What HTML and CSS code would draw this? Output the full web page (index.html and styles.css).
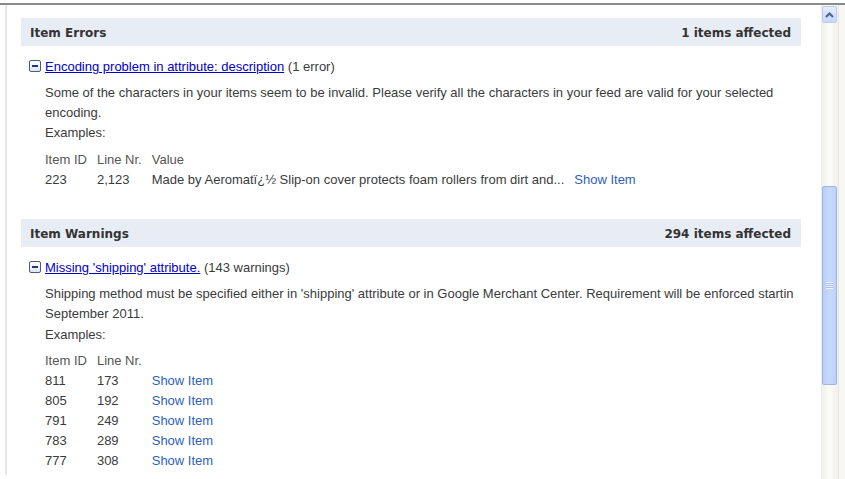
FILE: index.html
```html
<!DOCTYPE html>
<html>
<head>
<meta charset="utf-8">
<title>Feed diagnostics</title>
<link rel="stylesheet" href="styles.css">
</head>
<body>
<div class="window">
  <div class="viewport">
    <div class="content">
      <section class="group">
        <div class="group-head"><span>Item Errors</span><span>1 items affected</span></div>
        <div class="issue">
          <div class="issue-title"><span class="toggle"></span><a href="#">Encoding problem in attribute: description</a>&nbsp;<span class="count">(1 error)</span></div>
          <div class="issue-body">
            <p class="desc">Some of the characters in your items seem to be invalid. Please verify all the characters in your feed are valid for your selected encoding.</p>
            <p class="label">Examples:</p>
            <table class="examples">
              <tr><th>Item ID</th><th>Line Nr.</th><th>Value</th><th></th></tr>
              <tr><td>223</td><td>2,123</td><td>Made by Aeromatï¿½ Slip-on cover protects foam rollers from dirt and...</td><td><a class="show" href="#">Show Item</a></td></tr>
            </table>
          </div>
        </div>
      </section>
      <section class="group warnings">
        <div class="group-head"><span>Item Warnings</span><span>294 items affected</span></div>
        <div class="issue">
          <div class="issue-title"><span class="toggle"></span><a href="#">Missing 'shipping' attribute.</a>&nbsp;<span class="count">(143 warnings)</span></div>
          <div class="issue-body">
            <p class="desc">Shipping method must be specified either in 'shipping' attribute or in Google Merchant Center. Requirement will be enforced startin September 2011.</p>
            <p class="label">Examples:</p>
            <table class="examples">
              <tr><th>Item ID</th><th>Line Nr.</th><th></th></tr>
              <tr><td>811</td><td>173</td><td><a class="show" href="#">Show Item</a></td></tr>
              <tr><td>805</td><td>192</td><td><a class="show" href="#">Show Item</a></td></tr>
              <tr><td>791</td><td>249</td><td><a class="show" href="#">Show Item</a></td></tr>
              <tr><td>783</td><td>289</td><td><a class="show" href="#">Show Item</a></td></tr>
              <tr><td>777</td><td>308</td><td><a class="show" href="#">Show Item</a></td></tr>
            </table>
          </div>
        </div>
      </section>
    </div>
    <div class="scrollbar">
      <div class="sb-btn">
        <svg width="9" height="6" viewBox="0 0 9 6"><path d="M1 5 L4.5 1.5 L8 5" fill="none" stroke="#4d6185" stroke-width="2"/></svg>
      </div>
      <div class="sb-thumb">
        <div class="grip"></div>
      </div>
    </div>
    <div class="edge"></div>
  </div>
</div>
</body>
</html>
```
FILE: styles.css
```css
html, body {
  margin: 0;
  padding: 0;
  background: #fff;
}
body {
  font-family: "Liberation Sans", Arial, sans-serif;
  font-size: 13px;
  color: #3b3b3b;
}
.window {
  padding-top: 3px;
  height: 479px;
  box-sizing: border-box;
  overflow: hidden;
}
.viewport {
  border-top: 2px solid #8a8a8a;
  display: flex;
  height: 474px;
}
.content {
  flex: 1;
  margin-left: 5px;
  border-left: 2px solid #e3e6ef;
  padding: 13px 20px 0 14px;
  height: 470px;
  box-sizing: border-box;
  overflow: hidden;
}
.group-head {
  display: flex;
  justify-content: space-between;
  align-items: center;
  height: 28px;
  box-sizing: border-box;
  background: #e8edf5;
  padding: 2px 10px 0 9px;
  font-family: "DejaVu Sans", Verdana, sans-serif;
  font-weight: bold;
  font-size: 12px;
  color: #333;
}
.warnings {
  margin-top: 29px;
}
.issue-title {
  margin-top: 11px;
  height: 20px;
  line-height: 20px;
  padding-left: 8px;
  display: flex;
  align-items: center;
  white-space: nowrap;
}
.toggle {
  width: 10px;
  height: 10px;
  border: 1px solid #4b5b7c;
  border-radius: 2px;
  background: linear-gradient(#ffffff, #dfe4ee);
  margin-right: 4px;
  position: relative;
  flex: none;
  margin-top: -3px;
}
.toggle::after {
  content: "";
  position: absolute;
  left: 2px;
  top: 4px;
  width: 6px;
  height: 2px;
  background: #1f3a70;
}
.issue-title a {
  color: #0000cc;
  text-decoration: underline;
}
.issue-body {
  padding-left: 24px;
}
.desc {
  margin: 6px 0 0;
  line-height: 20px;
}
.label {
  margin: 0;
  line-height: 20px;
}
.warnings .label {
  margin-top: 1px;
}
.examples {
  border-collapse: collapse;
  margin-top: 7px;
}
.warnings .examples {
  margin-top: 6px;
}
.examples th,
.examples td {
  padding: 0 10px 0 0;
  height: 20px;
  line-height: 20px;
  font-weight: normal;
  text-align: left;
  white-space: nowrap;
  vertical-align: middle;
}
.examples th {
  color: #555;
}
a.show {
  color: #2f5fb8;
  text-decoration: none;
}
.scrollbar {
  width: 17px;
  flex: none;
  display: flex;
  flex-direction: column;
  background: linear-gradient(to right, #eeede5, #fbfbf8 45%, #f2f1eb);
}
.sb-btn {
  height: 15px;
  margin: 1px 1px 0;
  border: 1px solid #b7cbf5;
  border-radius: 2px;
  background: linear-gradient(#e6eefe, #c6d6fb);
  display: flex;
  align-items: center;
  justify-content: center;
}
.sb-thumb {
  margin: 163px 1px 0;
  height: 197px;
  border: 1px solid #9fb4e6;
  border-radius: 2px;
  background: linear-gradient(to right, #b9cdfa, #c8d9fd 50%, #bfd1fb);
  display: flex;
  align-items: center;
  justify-content: center;
}
.grip {
  width: 7px;
  height: 7px;
  background: repeating-linear-gradient(#eef3ff 0 1px, #a9bdec 1px 2px);
}
.edge {
  width: 7px;
  flex: none;
  background: linear-gradient(to right, #e6e6df 0 1px, #f7f7f4 1px);
}
```
